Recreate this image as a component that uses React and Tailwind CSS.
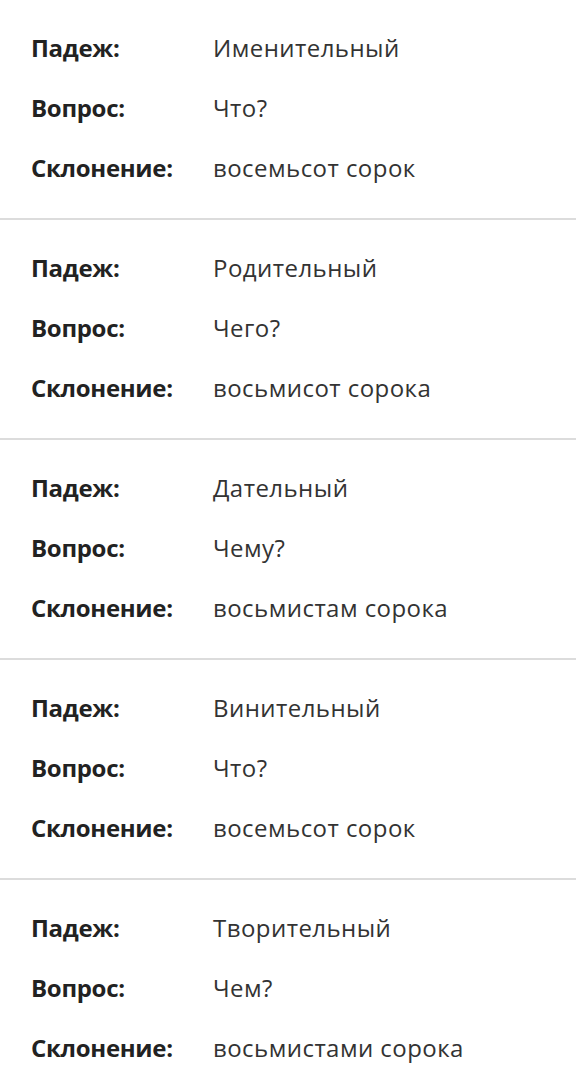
import React from 'react';

const cases = [
  { name: 'Именительный', question: 'Что?', form: 'восемьсот сорок' },
  { name: 'Родительный', question: 'Чего?', form: 'восьмисот сорока' },
  { name: 'Дательный', question: 'Чему?', form: 'восьмистам сорока' },
  { name: 'Винительный', question: 'Что?', form: 'восемьсот сорок' },
  { name: 'Творительный', question: 'Чем?', form: 'восьмистами сорока' },
];

const Row = ({ label, value }) => (
  <div className="flex items-center h-[60px]">
    <span className="w-[182px] shrink-0 font-bold text-[#222] tracking-[-0.3px]">{label}</span>
    <span className="text-[#333] tracking-[0.45px]">{value}</span>
  </div>
);

const App = () => {
  return (
    <div
      className="bg-white w-[576px] text-[24px]"
      style={{ fontFamily: '"Open Sans", "Noto Sans", sans-serif' }}
    >
      {cases.map((c, i) => (
        <div
          key={i}
          className="pl-[31px] pt-[18px] pb-[20px] border-b-2 border-[#dcdcdc] last:border-b-0"
        >
          <Row label="Падеж:" value={c.name} />
          <Row label="Вопрос:" value={c.question} />
          <Row label="Склонение:" value={c.form} />
        </div>
      ))}
    </div>
  );
};

export default App;
